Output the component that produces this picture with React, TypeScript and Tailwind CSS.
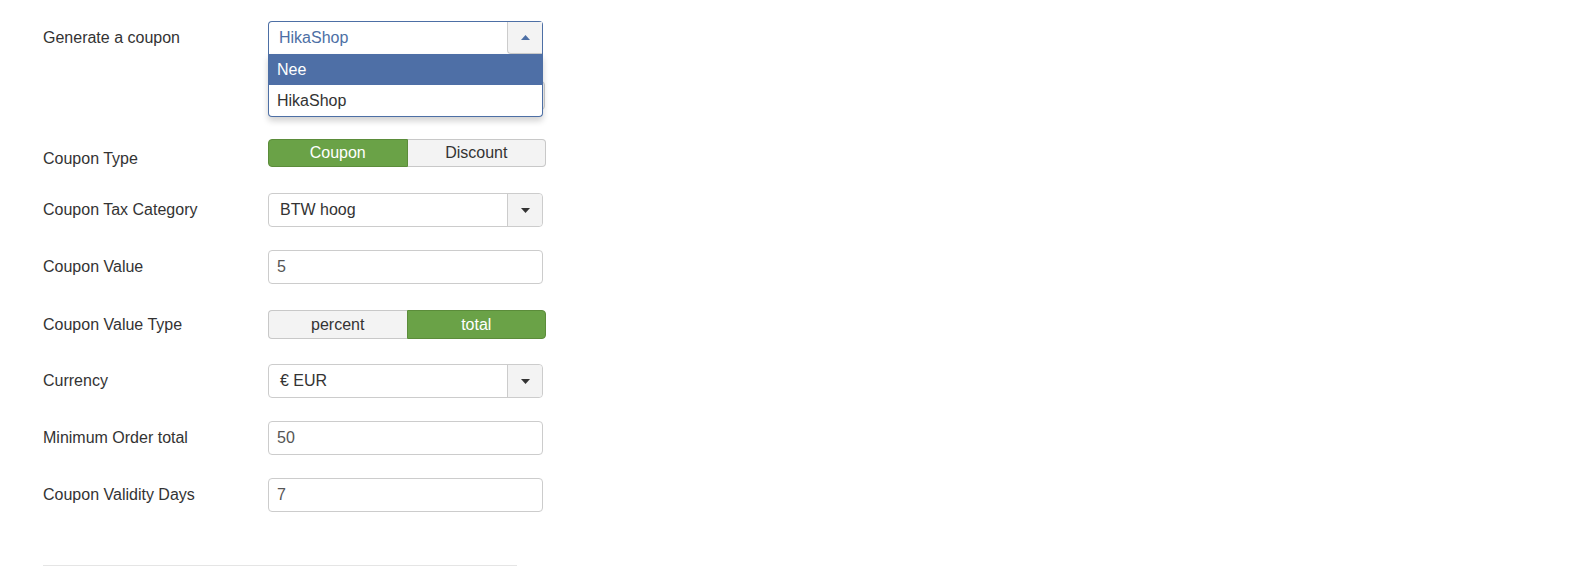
import { useState } from "react";

const font = { fontFamily: '"Liberation Sans", Arial, sans-serif' };

function Label({ text, pt }: { text: string; pt: string }) {
  return <div className={`w-[225px] shrink-0 pl-[43px] text-[16px] leading-[20px] text-[#333] ${pt}`}>{text}</div>;
}

function Caret({ up }: { up?: boolean }) {
  return (
    <svg width="9" height="5" viewBox="0 0 9 5">
      {up ? <path d="M0 5 L4.5 0 L9 5 Z" fill="#4d6fa5" /> : <path d="M0 0 L9 0 L4.5 5 Z" fill="#333" />}
    </svg>
  );
}

function SelectBox({ value }: { value: string }) {
  return (
    <div className="flex h-[34px] w-[275px] items-stretch rounded-[4px] border border-[#ccc] bg-white">
      <div className="flex flex-1 items-center pl-[11px] text-[16px] text-[#333]">{value}</div>
      <div className="flex w-[35px] items-center justify-center rounded-r-[4px] border-l border-[#ccc] bg-[#f3f3f3]">
        <Caret />
      </div>
    </div>
  );
}

function TextBox({ value }: { value: string }) {
  return (
    <div className="flex h-[34px] w-[275px] items-center rounded-[4px] border border-[#ccc] bg-white pl-[8px] text-[16px] text-[#555]">
      {value}
    </div>
  );
}

function Toggle({ options, active, h }: { options: string[]; active: number; h: string }) {
  return (
    <div className={`flex w-[278px] ${h}`}>
      {options.map((o, i) => (
        <div
          key={o}
          className={`flex flex-1 items-center justify-center text-[16px] ${
            i === 0 ? "rounded-l-[4px]" : "rounded-r-[4px]"
          } ${
            i === active
              ? "border border-[#5b8c3a] bg-[#6aa247] text-white"
              : "border border-[#c8c8c8] bg-[#f3f3f3] text-[#333]"
          } ${i === 0 && active !== 0 ? "border-r-0" : ""} ${i === 1 && active !== 1 ? "border-l-0" : ""}`}
        >
          {o}
        </div>
      ))}
    </div>
  );
}

export default function App() {
  const [open] = useState(true);
  return (
    <div className="min-h-[571px] w-[1572px] bg-white" style={font}>
      <div className="pt-[21px]">
        {/* Generate a coupon */}
        <div className="flex h-[89px]">
          <Label text="Generate a coupon" pt="pt-[7px]" />
          <div className="relative pl-[43px]">
            <div className="relative z-10 w-[275px]">
              <div className="flex h-[33px] items-stretch rounded-t-[4px] border border-b-0 border-[#4d6fa5] bg-white">
                <div className="flex flex-1 items-center pl-[10px] text-[16px] text-[#4d6fa5]">HikaShop</div>
                <div className="flex w-[35px] items-center justify-center rounded-bl-[4px] border-b border-l border-[#ccc] bg-[#f3f3f3]">
                  <Caret up />
                </div>
              </div>
              {open && (
                <div className="absolute left-0 right-0 top-[33px] rounded-b-[4px] border border-t-0 border-[#4d6fa5] bg-white shadow-[0_4px_6px_rgba(0,0,0,0.18)]">
                  <div className="flex h-[31px] items-center bg-[#4e6fa6] pl-[8px] text-[16px] text-white">Nee</div>
                  <div className="flex h-[31px] items-center pl-[8px] text-[16px] text-[#333]">HikaShop</div>
                </div>
              )}
            </div>
            <div className="mt-[27px] h-[29px] w-[277px] rounded-[4px] border border-[#ccc] bg-[#f3f3f3]" />
          </div>
        </div>

        <div className="mt-[29px] flex h-[28px]">
          <Label text="Coupon Type" pt="pt-[10px]" />
          <div className="pl-[43px]">
            <Toggle options={["Coupon", "Discount"]} active={0} h="h-[28px]" />
          </div>
        </div>

        <div className="mt-[26px] flex h-[34px]">
          <Label text="Coupon Tax Category" pt="pt-[7px]" />
          <div className="pl-[43px]">
            <SelectBox value="BTW hoog" />
          </div>
        </div>

        <div className="mt-[23px] flex h-[34px]">
          <Label text="Coupon Value" pt="pt-[7px]" />
          <div className="pl-[43px]">
            <TextBox value="5" />
          </div>
        </div>

        <div className="mt-[26px] flex h-[29px]">
          <Label text="Coupon Value Type" pt="pt-[5px]" />
          <div className="pl-[43px]">
            <Toggle options={["percent", "total"]} active={1} h="h-[29px]" />
          </div>
        </div>

        <div className="mt-[25px] flex h-[34px]">
          <Label text="Currency" pt="pt-[7px]" />
          <div className="pl-[43px]">
            <SelectBox value="€ EUR" />
          </div>
        </div>

        <div className="mt-[23px] flex h-[34px]">
          <Label text="Minimum Order total" pt="pt-[7px]" />
          <div className="pl-[43px]">
            <TextBox value="50" />
          </div>
        </div>

        <div className="mt-[23px] flex h-[34px]">
          <Label text="Coupon Validity Days" pt="pt-[7px]" />
          <div className="pl-[43px]">
            <TextBox value="7" />
          </div>
        </div>

        <div className="ml-[43px] mt-[53px] h-px w-[474px] bg-[#e5e5e5]" />
      </div>
    </div>
  );
}
